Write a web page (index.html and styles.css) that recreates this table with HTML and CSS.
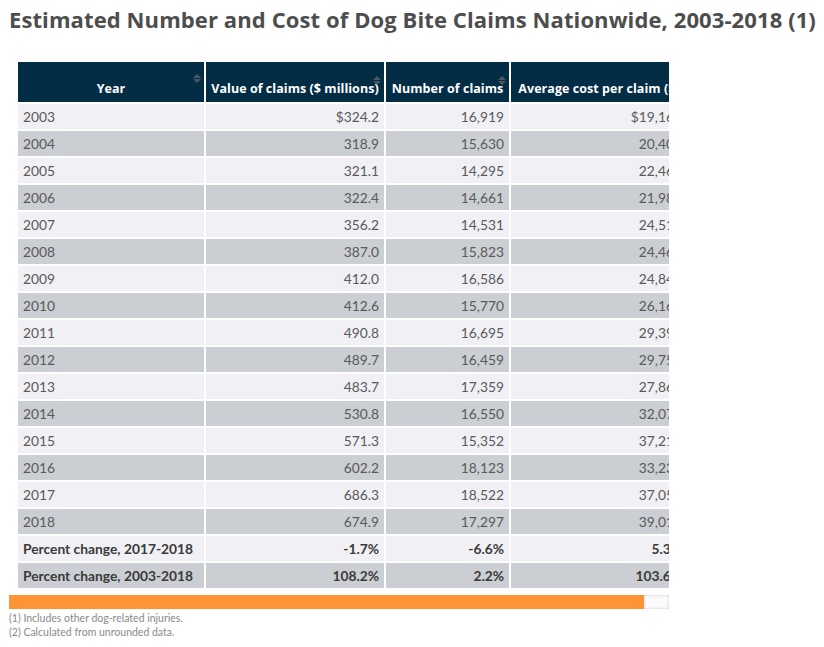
FILE: index.html
```html
<!DOCTYPE html>
<html lang="en">
<head>
<meta charset="utf-8">
<title>Dog Bite Claims</title>
<link rel="stylesheet" href="styles.css">
</head>
<body>
<h1 class="title">Estimated Number and Cost of Dog Bite Claims Nationwide, 2003-2018 (1)</h1>
<div class="table-wrap">
  <table class="data">
    <colgroup>
      <col class="c-year"><col class="c-value"><col class="c-num"><col class="c-avg">
    </colgroup>
    <thead>
      <tr>
        <th class="sortable">Year<span class="sort"></span></th>
        <th class="sortable">Value of claims ($ millions)<span class="sort"></span></th>
        <th class="sortable">Number of claims<span class="sort"></span></th>
        <th class="sortable">Average cost per claim ($)<span class="sort"></span></th>
      </tr>
    </thead>
    <tbody>
      <tr><td>2003</td><td>$324.2</td><td>16,919</td><td>$19,162</td></tr>
      <tr><td>2004</td><td>318.9</td><td>15,630</td><td>20,402</td></tr>
      <tr><td>2005</td><td>321.1</td><td>14,295</td><td>22,464</td></tr>
      <tr><td>2006</td><td>322.4</td><td>14,661</td><td>21,987</td></tr>
      <tr><td>2007</td><td>356.2</td><td>14,531</td><td>24,511</td></tr>
      <tr><td>2008</td><td>387.0</td><td>15,823</td><td>24,461</td></tr>
      <tr><td>2009</td><td>412.0</td><td>16,586</td><td>24,840</td></tr>
      <tr><td>2010</td><td>412.6</td><td>15,770</td><td>26,166</td></tr>
      <tr><td>2011</td><td>490.8</td><td>16,695</td><td>29,396</td></tr>
      <tr><td>2012</td><td>489.7</td><td>16,459</td><td>29,752</td></tr>
      <tr><td>2013</td><td>483.7</td><td>17,359</td><td>27,862</td></tr>
      <tr><td>2014</td><td>530.8</td><td>16,550</td><td>32,072</td></tr>
      <tr><td>2015</td><td>571.3</td><td>15,352</td><td>37,214</td></tr>
      <tr><td>2016</td><td>602.2</td><td>18,123</td><td>33,230</td></tr>
      <tr><td>2017</td><td>686.3</td><td>18,522</td><td>37,051</td></tr>
      <tr><td>2018</td><td>674.9</td><td>17,297</td><td>39,017</td></tr>
      <tr class="total"><td>Percent change, 2017-2018</td><td>-1.7%</td><td>-6.6%</td><td>5.3%</td></tr>
      <tr class="total"><td>Percent change, 2003-2018</td><td>108.2%</td><td>2.2%</td><td>103.6%</td></tr>
    </tbody>
  </table>
</div>
<div class="scrollbar"><div class="thumb"></div><div class="track"></div></div>
<p class="note">(1) Includes other dog-related injuries.</p>
<p class="note">(2) Calculated from unrounded data.</p>
</body>
</html>
```

FILE: styles.css
```css
html, body {
  margin: 0;
  padding: 0;
  background: #ffffff;
}
body {
  padding: 0 9px;
  font-family: Lato, "Open Sans", sans-serif;
}
.title {
  margin: 0;
  padding-top: 5px;
  font-family: "Open Sans", sans-serif;
  font-weight: 700;
  font-size: 22px;
  letter-spacing: 0.1px;
  line-height: 28px;
  color: #4d4d4d;
  white-space: nowrap;
}
.table-wrap {
  margin-top: 27px;
  width: 660px;
  overflow: hidden;
  padding-left: 7px;
  box-sizing: border-box;
}
.data {
  border-collapse: separate;
  border-spacing: 2px;
  table-layout: fixed;
  width: 671px;
}
.c-year { width: 186px; }
.c-value { width: 178px; }
.c-num { width: 123px; }
.c-avg { width: 176px; }
.data th {
  position: relative;
  height: 40px;
  box-sizing: border-box;
  padding: 0 3px 5px;
  background: #032c45;
  color: #ffffff;
  font-family: "Open Sans", sans-serif;
  font-weight: 700;
  font-size: 12.5px;
  letter-spacing: 0.05px;
  text-align: center;
  vertical-align: bottom;
  white-space: nowrap;
  overflow: hidden;
}
.sort {
  position: absolute;
  right: 7px;
  top: 12px;
  width: 0;
  height: 0;
}
.sort::before, .sort::after {
  content: "";
  position: absolute;
  left: -4px;
  border-left: 4px solid transparent;
  border-right: 4px solid transparent;
}
.sort::before {
  top: 0;
  border-bottom: 4px solid #4b5863;
}
.sort::after {
  top: 5px;
  border-top: 4px solid #4b5863;
}
.data th:first-child .sort { top: 12px; right: 7px; }
.data th:nth-child(2) .sort, .data th:nth-child(3) .sort { top: 14px; right: 7px; }
.data td {
  height: 25px;
  box-sizing: border-box;
  padding: 0 5px;
  font-size: 13.8px;
  color: #5a5a5a;
  text-align: right;
  white-space: nowrap;
  overflow: hidden;
  background: #f0f0f5;
}
.data td:first-child {
  text-align: left;
}
.data tbody tr:nth-child(even) td {
  background: #cbced2;
}
.data tr.total td {
  font-weight: 700;
  color: #3a3a3a;
}
.scrollbar {
  display: flex;
  width: 660px;
  height: 14px;
  margin-top: 5px;
}
.thumb {
  width: 635px;
  background: #ff9435;
}
.track {
  flex: 1;
  background: #fbfbfb;
  box-shadow: inset 0 0 3px #c8c8c8;
}
.note {
  margin: 0;
  font-size: 10.5px;
  line-height: 14px;
  color: #8a8a8a;
}
.note:first-of-type {
  margin-top: 2px;
}
```
